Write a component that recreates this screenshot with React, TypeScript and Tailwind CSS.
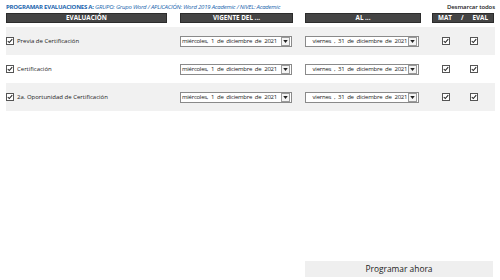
const rows = [
  { name: 'Previa de Certificación', shade: true },
  { name: 'Certificación', shade: false },
  { name: '2a. Oportunidad de Certificación', shade: true },
];

function Check() {
  return (
    <span className="inline-flex h-[8px] w-[8px] shrink-0 items-center justify-center border border-[#555] bg-white">
      <svg viewBox="0 0 8 8" className="h-[6px] w-[6px]">
        <path d="M1 4 L3 6 L7 1.5" fill="none" stroke="#222" strokeWidth="1.4" />
      </svg>
    </span>
  );
}

function Select({ text, w }: { text: string; w: string }) {
  return (
    <div className={`flex h-[11px] items-center border border-[#8a8a8a] bg-white ${w}`}>
      <span className="flex-1 overflow-hidden whitespace-pre pl-[1px] text-[6px] leading-none tracking-[-0.25px] text-[#222] [word-spacing:1.5px]">{text}</span>
      <span className="mr-[1px] flex h-[9px] w-[9px] items-center justify-center border border-[#9a9a9a] bg-[#f4f4f4]">
        <svg viewBox="0 0 6 4" className="h-[3px] w-[5px]">
          <path d="M0 0 L6 0 L3 4 Z" fill="#222" />
        </svg>
      </span>
    </div>
  );
}

export default function App() {
  return (
    <div className="flex h-[280px] w-[500px] flex-col bg-white font-['Open_Sans',sans-serif]">
      <div className="flex h-[13px] items-center justify-between pl-[6px] pr-[5px]">
        <p className="text-[6px] leading-none tracking-[-0.22px] text-[#2064ad]">
          <span className="font-bold">PROGRAMAR EVALUACIONES A: </span>
          <span className="italic">GRUPO: Grupo Word / APLICACIÓN: Word 2019 Academic / NIVEL: Academic</span>
        </p>
        <button className="text-[6px] font-semibold leading-none tracking-[-0.1px] text-[#222]">Desmarcar todos</button>
      </div>

      <div className="flex h-[10px] pl-[6px] text-[6.3px] font-bold leading-none text-white">
        <div className="flex w-[161px] items-center justify-center border border-[#2c2c2c] bg-[#444]">EVALUACIÓN</div>
        <div className="ml-[13px] flex w-[113px] items-center justify-center border border-[#2c2c2c] bg-[#444]">VIGENTE DEL ...</div>
        <div className="ml-[12px] flex w-[116px] items-center justify-center border border-[#2c2c2c] bg-[#444]">AL ...</div>
        <div className="ml-[11px] flex w-[62px] items-center justify-center gap-[9px] border border-[#2c2c2c] bg-[#444]">
          <span>MAT</span>
          <span>/</span>
          <span>EVAL</span>
        </div>
      </div>

      <div className="mt-[4px] ml-[6px] mr-[5px] flex flex-col">
        {rows.map((r) => (
          <div key={r.name} className={`flex h-[28px] items-center ${r.shade ? 'bg-[#f1f1f1]' : 'bg-white'}`}>
            <div className="flex w-[161px] items-center gap-[3px]">
              <Check />
              <span className="text-[6px] leading-none text-[#222]">{r.name}</span>
            </div>
            <div className="ml-[13px]">
              <Select w="w-[112px]" text="miércoles, 1 de diciembre de 2021" />
            </div>
            <div className="ml-[13px]">
              <Select w="w-[114px]" text="  viernes , 31 de diciembre de 2021" />
            </div>
            <div className="ml-[23px] flex items-center gap-[20px]">
              <Check />
              <Check />
            </div>
          </div>
        ))}
      </div>

      <div className="mt-auto mb-[3px] ml-[305px] flex h-[16px] w-[188px] items-center justify-center bg-[#efefef] text-[8.4px] leading-none text-[#222]">
        Programar ahora
      </div>
    </div>
  );
}
